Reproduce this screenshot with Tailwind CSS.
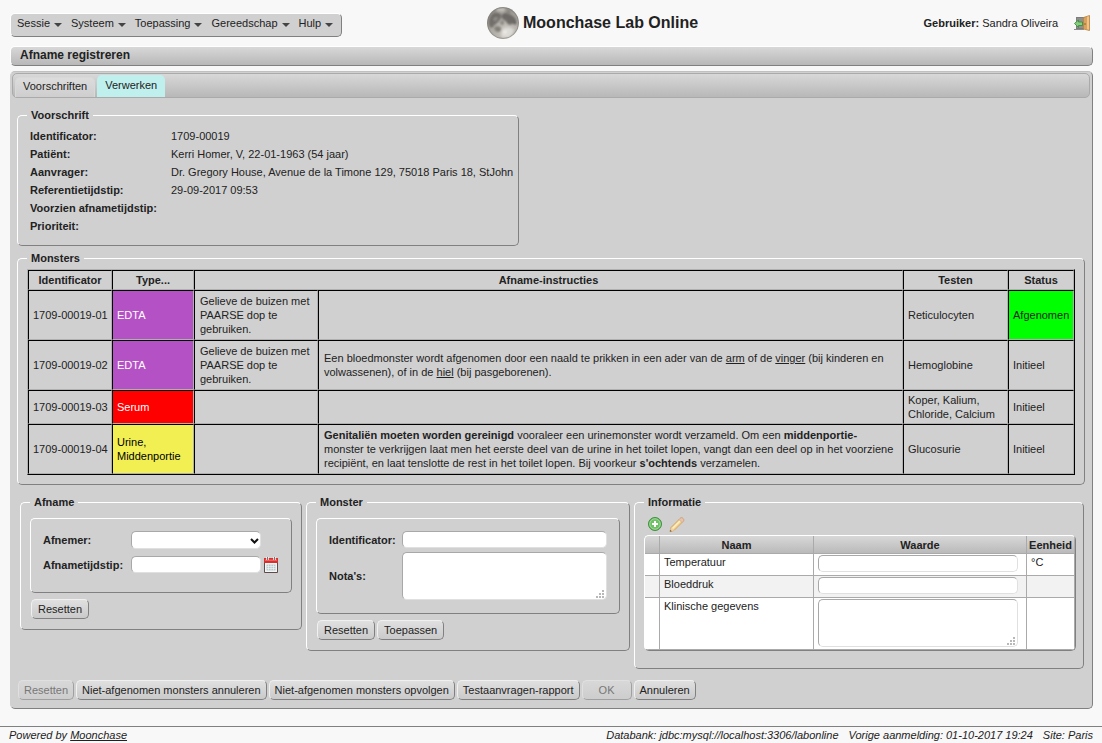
<!DOCTYPE html>
<html lang="nl">
<head>
  <meta charset="UTF-8">
  <meta name="viewport" content="width=device-width, initial-scale=1.0">
  <title>Moonchase Lab Online</title>
  <script src="https://cdn.jsdelivr.net/npm/@tailwindcss/browser@4"></script>
</head>
<body class="flex min-h-screen flex-col bg-[#f8f8f8] font-['Liberation_Sans',Arial,sans-serif] text-[11px] leading-[14px] text-[#222]">

  <!-- Header -->
  <header class="flex h-[46px] shrink-0 items-center pr-3 pl-2.5">
    <nav class="mt-1 flex h-6 items-start gap-[9px] rounded-[5px] border border-t-white border-r-[#808080] border-b-[#808080] border-l-white bg-[#d0d0d0] pt-0.5 pr-2 pl-1.5">
      <button type="button" class="flex items-center gap-1">Sessie <svg class="mt-1 h-1 w-2" viewBox="0 0 8 4"><path d="M0 0h8L4 4z" fill="#444"/></svg></button>
      <button type="button" class="flex items-center gap-1">Systeem <svg class="mt-1 h-1 w-2" viewBox="0 0 8 4"><path d="M0 0h8L4 4z" fill="#444"/></svg></button>
      <button type="button" class="flex items-center gap-1">Toepassing <svg class="mt-1 h-1 w-2" viewBox="0 0 8 4"><path d="M0 0h8L4 4z" fill="#444"/></svg></button>
      <button type="button" class="flex items-center gap-1">Gereedschap <svg class="mt-1 h-1 w-2" viewBox="0 0 8 4"><path d="M0 0h8L4 4z" fill="#444"/></svg></button>
      <button type="button" class="flex items-center gap-1">Hulp <svg class="mt-1 h-1 w-2" viewBox="0 0 8 4"><path d="M0 0h8L4 4z" fill="#444"/></svg></button>
    </nav>

    <div class="flex flex-1 items-center justify-center gap-1">
      <svg class="size-8" viewBox="0 0 32 32">
        <defs>
          <radialGradient id="moon" cx="60%" cy="75%" r="75%">
            <stop offset="0" stop-color="#cfccc6"/>
            <stop offset=".6" stop-color="#aeaba5"/>
            <stop offset="1" stop-color="#8d8a84"/>
          </radialGradient>
          <clipPath id="disc"><circle cx="16" cy="16" r="16"/></clipPath>
          <filter id="soft"><feGaussianBlur stdDeviation=".8"/></filter>
        </defs>
        <circle cx="16" cy="16" r="16" fill="url(#moon)"/>
        <g clip-path="url(#disc)">
          <g filter="url(#soft)">
            <path d="M3 11c1-4 5-6 8-5 3 0 4 3 3 5s-2 3-4 5-3 2-4 4-4 0-4-3 0-4 1-6z" fill="#5f5c58" opacity=".75"/>
            <path d="M15 8c2-3 5-2 7-1s3 1 5 3 3 4 2 5-3 1-4 2-4 1-5-1-1-2-3-3-3-3-2-5z" fill="#5c5955" opacity=".8"/>
            <path d="M8 20c2-1 5-1 6 1s-1 4-3 4-5-3-3-5z" fill="#6c6964" opacity=".75"/>
            <path d="M14 14c1-1 3 0 3 1s0 3-2 3-2-3-1-4z" fill="#74716c" opacity=".7"/>
            <path d="M19 3c2 0 4 1 5 3l-3 0z" fill="#77746f" opacity=".8"/>
            <circle cx="28" cy="16" r="1.600" fill="#5f5c58"/>
            <path d="M15 23c3-3 9-3 12 0l-3 6c-3 2-8 2-10 0z" fill="#e3e1dc" opacity=".8"/>
            <path d="M9 2c3-1 7-2 10 0l-3 3-6-1z" fill="#c2bfb9"/>
            <path d="M6 12l3-2 2 1-3 3z" fill="#989590"/>
            <circle cx="18" cy="25" r="1.600" fill="#f3f1ed"/>
          </g>
          <circle cx="16" cy="16" r="15.500" fill="none" stroke="#7a7771" opacity=".5"/>
        </g>
      </svg>
      <h1 class="text-base leading-5 font-bold">Moonchase Lab Online</h1>
    </div>

    <div class="flex w-[247px] items-center justify-end gap-4">
      <div><b>Gebruiker:</b> Sandra Oliveira</div>
      <button type="button" aria-label="Afmelden">
        <svg class="size-4" viewBox="0 0 16 16">
          <path d="M2 2h9v12H2z" fill="#7d7d7b"/>
          <path d="M3 3h7v10H3z" fill="#8f8f8d"/>
          <path d="M0 14h10v1H0z" fill="#8c8c8a"/>
          <path d="M9.500 2.500L15.500.5v15l-6-1.500z" fill="#d9a25c" stroke="#b9813f" stroke-width=".8"/>
          <path d="M13 1.800l2-.6v13.500l-2-.5z" fill="#efc489"/>
          <circle cx="11" cy="9" r=".7" fill="#7a4d18"/>
          <path d="M.5 8.500L4.500 5v2h4v3.500h-4v2z" fill="#86cf80" stroke="#3b8f3d" stroke-width=".9"/>
        </svg>
      </button>
    </div>
  </header>

  <h2 class="mr-[9px] ml-2.5 h-5 shrink-0 rounded-[5px] border border-t-white border-r-[#808080] border-b-[#808080] border-l-white bg-linear-to-b from-[#d8d8d8] to-[#b8b8b8] pl-[9px] text-xs leading-[17px] font-bold">Afname registreren</h2>

  <main class="mt-[5px] mr-[9px] ml-2.5 rounded-[5px] border border-t-[#c0c0c0] border-r-[#808080] border-b-[#808080] border-l-[#d0d0d0] bg-[#d0d0d0] pb-2">
    <!-- Tabs -->
    <div class="mr-0.5 ml-px mt-px flex h-[25px] items-end rounded-[5px] border border-[#aaa] bg-linear-to-b from-[#d8d8d8] to-[#b8b8b8] pl-0.5" role="tablist">
      <button type="button" role="tab" class="mr-0.5 h-5 rounded-t-[5px] border border-b-0 border-[#d8d8d8] bg-linear-to-b from-[#dcdcdc] to-[#cecece] px-[7px] pb-[3px]">Voorschriften</button>
      <button type="button" role="tab" aria-selected="true" class="h-[22px] rounded-t-[5px] bg-[#bff0ee] px-2 pb-[3px]">Verwerken</button>
    </div>

    <!-- Voorschrift -->
    <fieldset class="mt-2.5 ml-1.5 w-fit rounded-[5px] border border-t-white border-r-[#808080] border-b-[#808080] border-l-white pt-[5px] pr-[5px] pb-2.5 pl-[9px]">
      <legend class="px-1 font-bold">Voorschrift</legend>
      <dl class="grid auto-rows-[18px] grid-cols-[141px_auto] items-center pl-[3px]">
        <dt class="font-bold">Identificator:</dt><dd>1709-00019</dd>
        <dt class="font-bold">Patiënt:</dt><dd>Kerri Homer, V, 22-01-1963 (54 jaar)</dd>
        <dt class="font-bold">Aanvrager:</dt><dd>Dr. Gregory House, Avenue de la Timone 129, 75018 Paris 18, StJohn</dd>
        <dt class="font-bold">Referentietijdstip:</dt><dd>29-09-2017 09:53</dd>
        <dt class="font-bold">Voorzien afnametijdstip:</dt><dd></dd>
        <dt class="font-bold">Prioriteit:</dt><dd></dd>
      </dl>
    </fieldset>

    <!-- Monsters -->
    <fieldset class="mt-[5px] mr-[7px] ml-1.5 min-w-0 rounded-[5px] border border-t-white border-r-[#808080] border-b-[#808080] border-l-white px-[9px] pt-1 pb-[9px]">
      <legend class="px-1 font-bold">Monsters</legend>
      <table class="w-full table-fixed border-separate border-spacing-0 border border-t-[#b0b0b0] border-r-black border-b-black border-l-[#b0b0b0] text-left [&_td]:border [&_td]:border-t-black [&_td]:border-r-[#b0b0b0] [&_td]:border-b-[#b0b0b0] [&_td]:border-l-black [&_th]:border [&_th]:border-t-black [&_th]:border-r-[#b0b0b0] [&_th]:border-b-[#b0b0b0] [&_th]:border-l-black [&_th]:py-0.5 [&_th]:text-center">
        <colgroup>
          <col class="w-[84px]"><col class="w-[82px]"><col class="w-[124px]"><col><col class="w-[105px]"><col class="w-[66px]">
        </colgroup>
        <thead>
          <tr><th>Identificator</th><th>Type...</th><th colspan="2">Afname-instructies</th><th>Testen</th><th>Status</th></tr>
        </thead>
        <tbody>
          <tr>
            <td class="px-1 py-0.5 whitespace-nowrap">1709-00019-01</td>
            <td class="bg-[#b452c5] px-1 py-0.5 text-white">EDTA</td>
            <td class="px-[5px] py-[3px]">Gelieve de buizen met PAARSE dop te gebruiken.</td>
            <td class="px-[5px] py-[3px]"></td>
            <td class="px-1 py-0.5">Reticulocyten</td>
            <td class="bg-[#00ff00] px-1 py-0.5 whitespace-nowrap">Afgenomen</td>
          </tr>
          <tr>
            <td class="px-1 py-0.5 whitespace-nowrap">1709-00019-02</td>
            <td class="bg-[#b452c5] px-1 py-0.5 text-white">EDTA</td>
            <td class="px-[5px] py-[3px]">Gelieve de buizen met PAARSE dop te gebruiken.</td>
            <td class="px-[5px] py-[3px]">Een bloedmonster wordt afgenomen door een naald te prikken in een ader van de <a href="#" class="underline">arm</a> of de <a href="#" class="underline">vinger</a> (bij kinderen en volwassenen), of in de <a href="#" class="underline">hiel</a> (bij pasgeborenen).</td>
            <td class="px-1 py-0.5">Hemoglobine</td>
            <td class="px-1 py-0.5">Initieel</td>
          </tr>
          <tr>
            <td class="px-1 py-0.5 whitespace-nowrap">1709-00019-03</td>
            <td class="bg-[#ff0000] px-1 py-0.5 text-white">Serum</td>
            <td></td>
            <td></td>
            <td class="px-1 py-0.5">Koper, Kalium, Chloride, Calcium</td>
            <td class="px-1 py-0.5">Initieel</td>
          </tr>
          <tr>
            <td class="px-1 py-0.5 whitespace-nowrap">1709-00019-04</td>
            <td class="bg-[#f2ef53] px-1 py-0.5 text-black">Urine, Middenportie</td>
            <td></td>
            <td class="px-[5px] py-[3px]"><b>Genitaliën moeten worden gereinigd</b> vooraleer een urinemonster wordt verzameld. Om een <b>middenportie-</b><br>monster te verkrijgen laat men het eerste deel van de urine in het toilet lopen, vangt dan een deel op in het voorziene recipiënt, en laat tenslotte de rest in het toilet lopen. Bij voorkeur <b>s'ochtends</b> verzamelen.</td>
            <td class="px-1 py-0.5">Glucosurie</td>
            <td class="px-1 py-0.5">Initieel</td>
          </tr>
        </tbody>
      </table>
    </fieldset>

    <div class="mt-2.5 mr-2 ml-[9px] flex items-start gap-1">
      <!-- Afname -->
      <fieldset class="w-[282px] shrink-0 rounded-[5px] border border-t-white border-r-[#808080] border-b-[#808080] border-l-white px-[9px] pt-[9px] pb-2.5">
        <legend class="px-1 font-bold">Afname</legend>
        <div class="grid h-[75px] grid-cols-[88px_130px_auto] content-start items-center gap-y-[7px] rounded-[5px] border border-t-white border-r-[#808080] border-b-[#808080] border-l-white pt-3 pl-3">
          <label for="afnemer" class="font-bold">Afnemer:</label>
          <div class="relative col-span-2 w-[130px]">
            <select id="afnemer" class="block h-[18px] w-full appearance-none rounded-[5px] border border-t-[#a8a8a8] border-r-[#e0e0e0] border-b-[#e0e0e0] border-l-[#a8a8a8] bg-white"><option></option></select>
            <svg class="pointer-events-none absolute top-[7px] right-0.5 h-[7px] w-[9px]" viewBox="0 0 9 7"><path d="M1 1l3.500 3.500L8 1" fill="none" stroke="#111" stroke-width="2"/></svg>
          </div>
          <label for="tijdstip" class="font-bold">Afnametijdstip:</label>
          <input id="tijdstip" type="text" class="h-[17px] w-full rounded-[5px] border border-t-[#a8a8a8] border-r-[#e0e0e0] border-b-[#e0e0e0] border-l-[#a8a8a8] bg-white px-1">
          <button type="button" class="ml-[3px] h-4 w-3.5" aria-label="Kalender">
            <svg class="h-4 w-3.5" viewBox="0 0 14 16">
              <path d="M.5 2.500h13v13H.5z" fill="#f4f6f6" stroke="#5f4a4c"/>
              <path d="M0 1h14v5H0z" fill="#d8302f"/>
              <path d="M1 2.500h12V4H1z" fill="#f0605c"/>
              <path d="M3.500 0v3M10.500 0v3" stroke="#fff" stroke-width="2.400"/>
              <path d="M3.500 0v3M10.500 0v3" stroke="#777" stroke-width="1"/>
              <path d="M2.500 7.500h9v6h-9z" fill="#b9c9c9"/>
              <path d="M2.500 9.500h9M2.500 11.500h9M4.500 7.500v6M7 7.500v6M9.500 7.500v6" stroke="#eef4f4" stroke-width=".7"/>
            </svg>
          </button>
        </div>
        <div class="mt-1.5 flex pl-px">
          <button type="button" class="h-5 rounded-[5px] border border-t-[#f0f0f0] border-r-[#808080] border-b-[#808080] border-l-[#f0f0f0] bg-linear-to-b from-[#e0e0e0] to-[#cacaca] px-1.5">Resetten</button>
        </div>
      </fieldset>

      <!-- Monster -->
      <fieldset class="w-[324px] shrink-0 rounded-[5px] border border-t-white border-r-[#808080] border-b-[#808080] border-l-white px-[9px] pt-[9px] pb-2.5">
        <legend class="px-1 font-bold">Monster</legend>
        <div class="grid grid-cols-[73px_auto] items-center gap-y-1 rounded-[5px] border border-t-white border-r-[#808080] border-b-[#808080] border-l-white px-3 pt-3 pb-[13px]">
          <label for="monster-id" class="font-bold">Identificator:</label>
          <input id="monster-id" type="text" class="h-[17px] w-full rounded-[5px] border border-t-[#a8a8a8] border-r-[#e0e0e0] border-b-[#e0e0e0] border-l-[#a8a8a8] bg-white px-1">
          <label for="notas" class="font-bold">Nota's:</label>
          <div class="relative">
            <textarea id="notas" class="block h-12 w-full resize-none rounded-[5px] border border-t-[#a8a8a8] border-r-[#e0e0e0] border-b-[#e0e0e0] border-l-[#a8a8a8] bg-white px-1"></textarea>
            <svg class="pointer-events-none absolute right-[3px] bottom-0.5 size-2" viewBox="0 0 8 8" shape-rendering="crispEdges"><path d="M6 0h2v2H6zM3 3h2v2H3zM6 3h2v2H6zM0 6h2v2H0zM3 6h2v2H3zM6 6h2v2H6z" fill="#b8b8b8"/></svg>
          </div>
        </div>
        <div class="mt-1.5 flex gap-0.5 pl-px">
          <button type="button" class="h-5 rounded-[5px] border border-t-[#f0f0f0] border-r-[#808080] border-b-[#808080] border-l-[#f0f0f0] bg-linear-to-b from-[#e0e0e0] to-[#cacaca] px-1.5">Resetten</button>
          <button type="button" class="h-5 rounded-[5px] border border-t-[#f0f0f0] border-r-[#808080] border-b-[#808080] border-l-[#f0f0f0] bg-linear-to-b from-[#e0e0e0] to-[#cacaca] px-1.5">Toepassen</button>
        </div>
      </fieldset>

      <!-- Informatie -->
      <fieldset class="min-w-0 flex-1 rounded-[5px] border border-t-white border-r-[#808080] border-b-[#808080] border-l-white pt-2 pr-[7px] pb-[17px] pl-[9px]">
        <legend class="px-1 font-bold">Informatie</legend>
        <div class="flex h-[18px] gap-[7px] pl-1">
          <button type="button" class="size-3.5" aria-label="Toevoegen">
            <svg class="size-3.5" viewBox="0 0 14 14">
              <circle cx="7" cy="7" r="6.500" fill="#5fae59" stroke="#3f8f3c"/>
              <circle cx="7" cy="7" r="5.300" fill="#6fc168" stroke="#b5e2b0" stroke-width=".8"/>
              <path d="M7 4v6M4 7h6" stroke="#fff" stroke-width="2"/>
            </svg>
          </button>
          <button type="button" class="size-4" aria-label="Bewerken">
            <svg class="size-4" viewBox="0 0 16 16">
              <path d="M1 14.500l1-4L11 1.500c1-1 2-1 3 0s1 2 0 3l-9 9z" fill="#f3d08c" stroke="#cfa05a" stroke-width=".9"/>
              <path d="M3.500 11.500L11.500 3.500" stroke="#fcf0c4" stroke-width="1.600"/>
              <path d="M11 1.500c1-1 2-1 3 0s1 2 0 3l-1 1-3-3z" fill="#e6c3ae" stroke="#cda48b" stroke-width=".7"/>
              <path d="M1 14.500l1-4 3 3z" fill="#e8d3b2"/>
              <path d="M.8 14.800l.6-2 1.400 1.400z" fill="#7a5a38"/>
            </svg>
          </button>
        </div>
        <div class="overflow-hidden rounded-[5px] border border-t-white border-r-[#808080] border-b-[#808080] border-l-white bg-white">
          <table class="w-full table-fixed border-separate border-spacing-0 text-left [&_td]:border-r [&_td]:border-b [&_td]:border-[#aaa] [&_td]:align-top [&_th]:border-r [&_th]:border-b [&_th]:border-[#aaa]">
            <colgroup><col class="w-[15px]"><col class="w-[154px]"><col><col class="w-12"></colgroup>
            <thead>
              <tr class="h-[18px] bg-linear-to-b from-[#d8d8d8] to-[#b8b8b8]"><th></th><th class="text-center">Naam</th><th class="text-center">Waarde</th><th class="text-center whitespace-nowrap">Eenheid</th></tr>
            </thead>
            <tbody>
              <tr class="h-[22px]">
                <td></td>
                <td class="px-1 pt-px"><label for="temperatuur">Temperatuur</label></td>
                <td class="pt-px pl-1"><input id="temperatuur" type="text" class="block h-[17px] w-[200px] rounded-[5px] border border-t-[#a8a8a8] border-r-[#e0e0e0] border-b-[#e0e0e0] border-l-[#a8a8a8] bg-white px-1"></td>
                <td class="px-1 pt-px">°C</td>
              </tr>
              <tr class="h-[22px] bg-[#f2f2f2]">
                <td></td>
                <td class="px-1 pt-px"><label for="bloeddruk">Bloeddruk</label></td>
                <td class="pt-px pl-1"><input id="bloeddruk" type="text" class="block h-[17px] w-[200px] rounded-[5px] border border-t-[#a8a8a8] border-r-[#e0e0e0] border-b-[#e0e0e0] border-l-[#a8a8a8] bg-white px-1"></td>
                <td></td>
              </tr>
              <tr class="h-[52px]">
                <td></td>
                <td class="px-1 pt-px"><label for="klinisch">Klinische gegevens</label></td>
                <td class="pt-px pl-1">
                  <div class="relative w-[200px]">
                    <textarea id="klinisch" class="block h-12 w-full resize-none rounded-[5px] border border-t-[#a8a8a8] border-r-[#e0e0e0] border-b-[#e0e0e0] border-l-[#a8a8a8] bg-white px-1"></textarea>
                    <svg class="pointer-events-none absolute right-[3px] bottom-0.5 size-2" viewBox="0 0 8 8" shape-rendering="crispEdges"><path d="M6 0h2v2H6zM3 3h2v2H3zM6 3h2v2H6zM0 6h2v2H0zM3 6h2v2H3zM6 6h2v2H6z" fill="#b8b8b8"/></svg>
                  </div>
                </td>
                <td></td>
              </tr>
            </tbody>
          </table>
        </div>
      </fieldset>
    </div>

    <!-- Actions -->
    <div class="mt-[11px] ml-[7px] flex gap-0.5">
      <button type="button" disabled class="h-5 rounded-[5px] border border-t-[#e0e0e0] border-r-[#a0a0a0] border-b-[#a0a0a0] border-l-[#e0e0e0] bg-linear-to-b from-[#d8d8d8] to-[#cdcdcd] px-[5px] text-[#777]">Resetten</button>
      <button type="button" class="h-5 rounded-[5px] border border-t-[#f0f0f0] border-r-[#808080] border-b-[#808080] border-l-[#f0f0f0] bg-linear-to-b from-[#e0e0e0] to-[#cacaca] px-[5px]">Niet-afgenomen monsters annuleren</button>
      <button type="button" class="h-5 rounded-[5px] border border-t-[#f0f0f0] border-r-[#808080] border-b-[#808080] border-l-[#f0f0f0] bg-linear-to-b from-[#e0e0e0] to-[#cacaca] px-[5px]">Niet-afgenomen monsters opvolgen</button>
      <button type="button" class="h-5 rounded-[5px] border border-t-[#f0f0f0] border-r-[#808080] border-b-[#808080] border-l-[#f0f0f0] bg-linear-to-b from-[#e0e0e0] to-[#cacaca] px-[5px]">Testaanvragen-rapport</button>
      <button type="button" disabled class="h-5 min-w-[50px] rounded-[5px] border border-t-[#e0e0e0] border-r-[#a0a0a0] border-b-[#a0a0a0] border-l-[#e0e0e0] bg-linear-to-b from-[#d8d8d8] to-[#cdcdcd] px-[5px] text-[#777]">OK</button>
      <button type="button" class="h-5 rounded-[5px] border border-t-[#f0f0f0] border-r-[#808080] border-b-[#808080] border-l-[#f0f0f0] bg-linear-to-b from-[#e0e0e0] to-[#cacaca] px-[5px]">Annuleren</button>
    </div>
  </main>

  <footer class="mt-auto flex h-[17px] shrink-0 border-t border-[#808080] px-[9px] pt-px italic">
    <div>Powered by <a href="#" class="underline">Moonchase</a></div>
    <div class="ml-auto flex gap-2.5">
      <span>Databank: jdbc:mysql://localhost:3306/labonline</span>
      <span>Vorige aanmelding: 01-10-2017 19:24</span>
      <span>Site: Paris</span>
    </div>
  </footer>

</body>
</html>
